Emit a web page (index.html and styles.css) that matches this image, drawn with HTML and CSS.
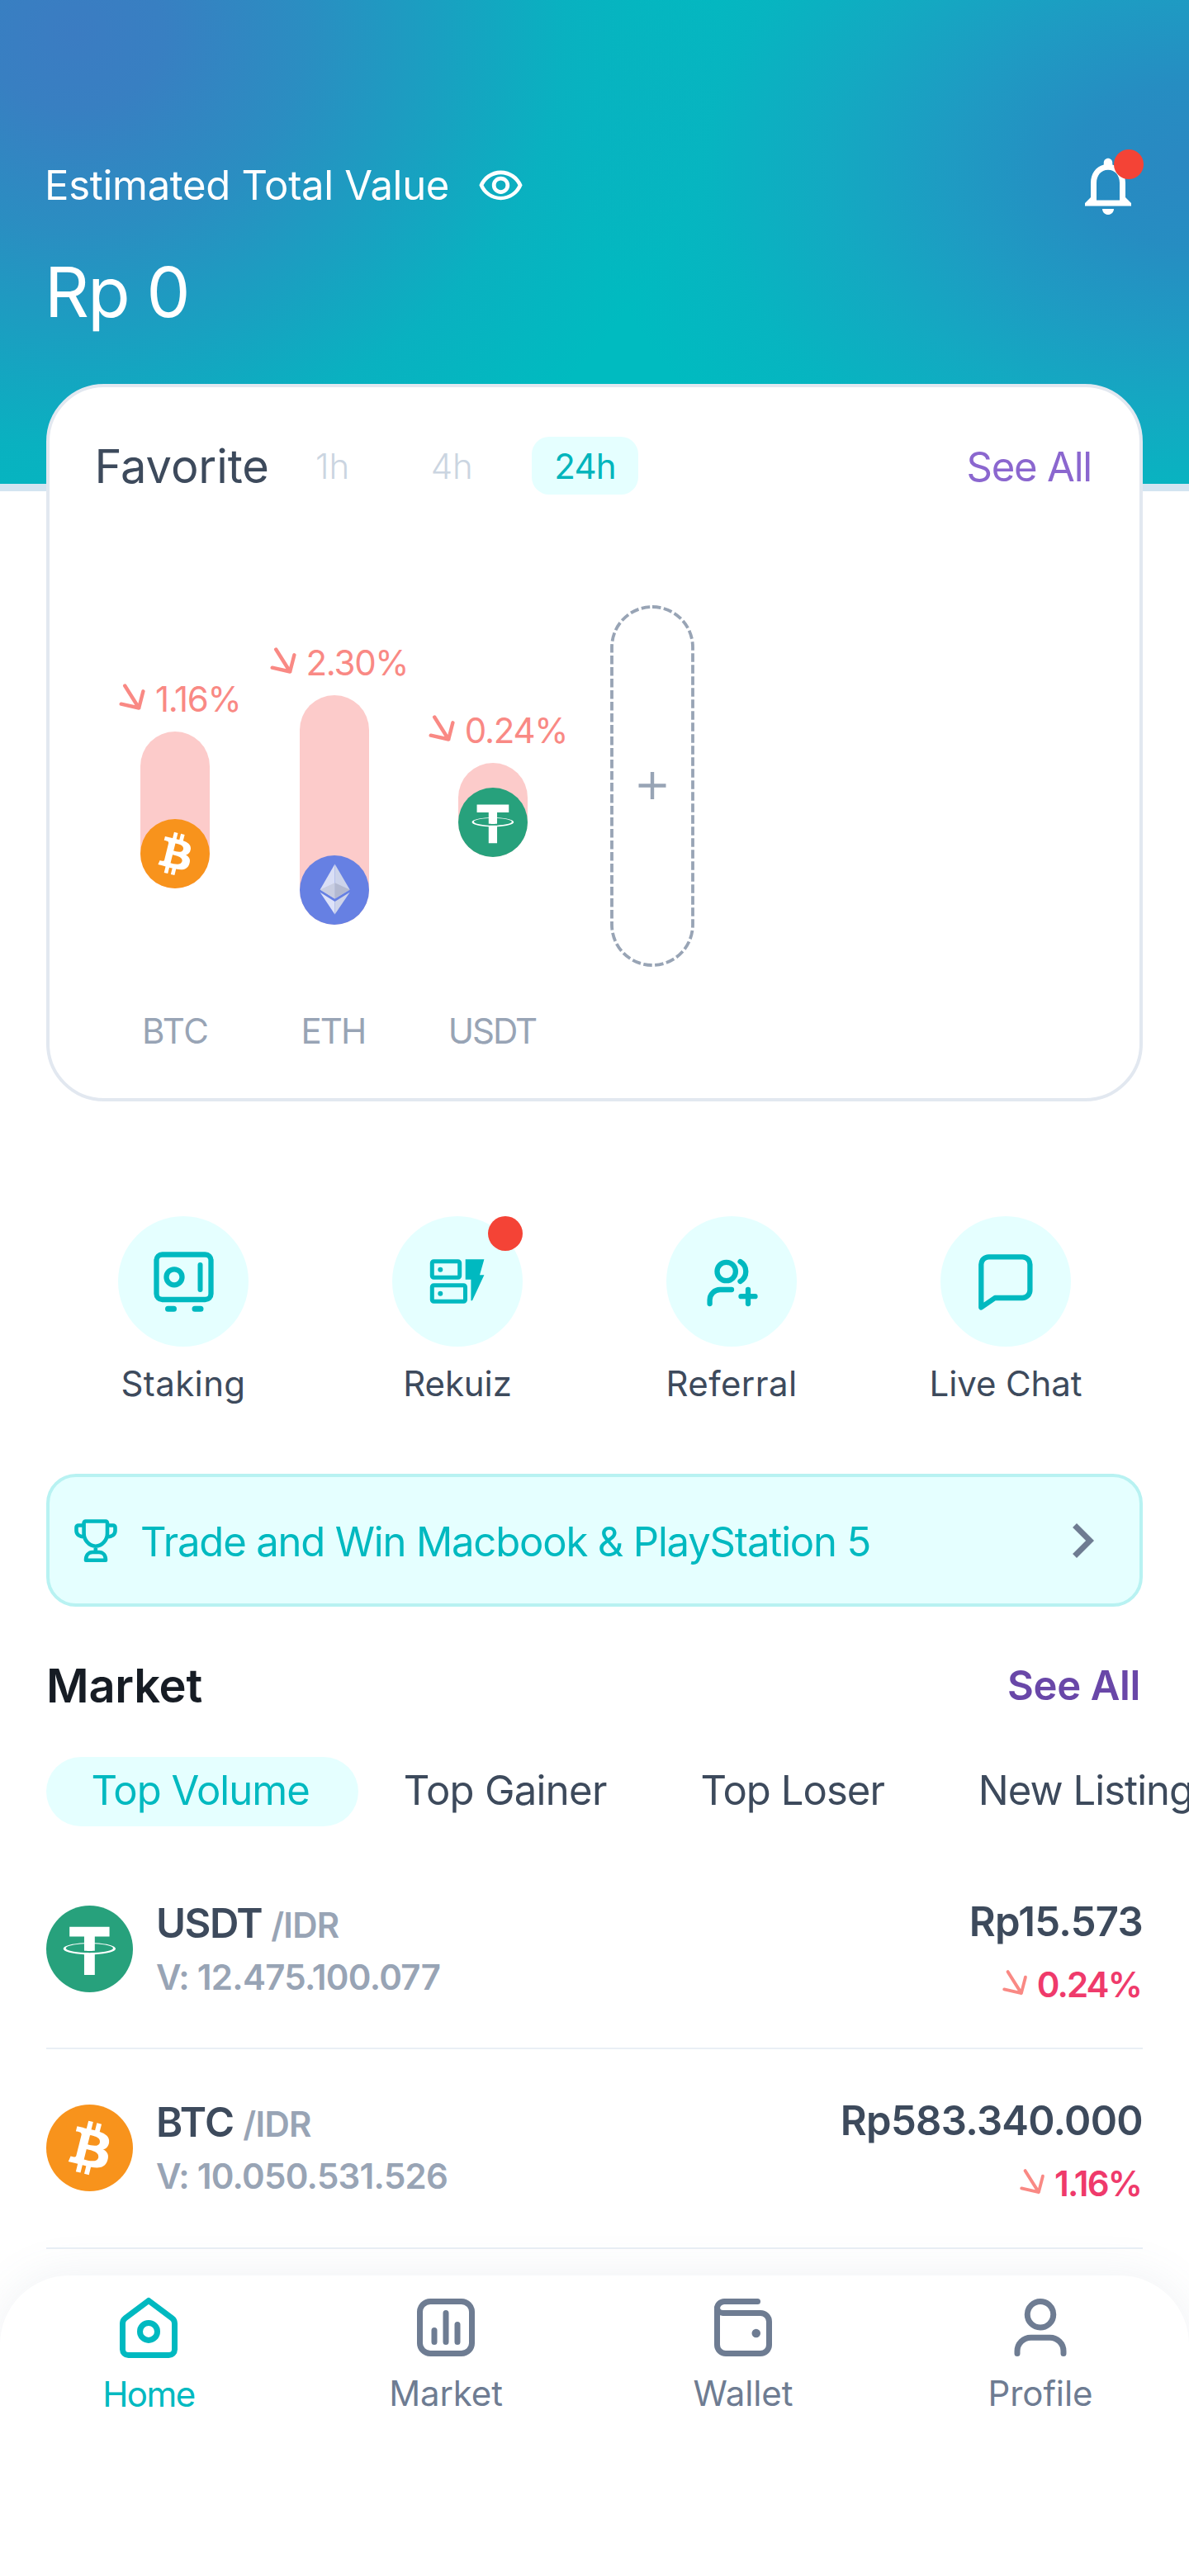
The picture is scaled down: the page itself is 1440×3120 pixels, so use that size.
FILE: index.html
```html
<!DOCTYPE html>
<html lang="en">
<head>
<meta charset="utf-8">
<title>Home</title>
<link rel="stylesheet" href="styles.css">
</head>
<body>
<svg class="defs" aria-hidden="true">
  <symbol id="down" viewBox="0 0 55 38"><path d="M18.2 2.5 35.2 29.5M13.7 24.7 35.2 29.5 40.4 9.3"/></symbol>
  <symbol id="btc" viewBox="0 0 32 32"><circle cx="16" cy="16" r="16" fill="#f8931c"/><path fill="#fff" d="M23.189 14.02c.314-2.096-1.283-3.223-3.465-3.975l.708-2.84-1.728-.43-.69 2.765c-.454-.114-.92-.22-1.385-.326l.695-2.783L15.596 6l-.708 2.839c-.376-.086-.746-.17-1.104-.26l.002-.009-2.384-.595-.46 1.846s1.283.294 1.256.312c.7.175.826.638.805 1.006l-.806 3.235c.048.012.11.03.18.057l-.183-.045-1.13 4.532c-.086.212-.303.531-.793.41.018.025-1.256-.313-1.256-.313l-.858 1.978 2.25.561c.418.105.828.215 1.231.318l-.715 2.872 1.727.43.708-2.84c.472.127.93.245 1.378.357l-.706 2.828 1.728.43.715-2.866c2.948.558 5.164.333 6.097-2.333.752-2.146-.037-3.385-1.588-4.192 1.13-.26 1.98-1.003 2.207-2.538zm-3.95 5.538c-.533 2.147-4.148.986-5.32.695l.95-3.805c1.172.293 4.929.872 4.37 3.11zm.535-5.569c-.487 1.953-3.495.96-4.47.717l.86-3.45c.975.243 4.118.696 3.61 2.733z"/></symbol>
  <symbol id="usdt" viewBox="0 0 32 32"><circle cx="16" cy="16" r="16" fill="#27a17c"/><path fill="#fff" d="M17.922 17.383v-.002c-.11.008-.677.042-1.942.042-1.01 0-1.721-.03-1.971-.042v.003c-3.888-.171-6.79-.848-6.79-1.658 0-.809 2.902-1.486 6.79-1.66v2.644c.254.018.982.061 1.988.061 1.207 0 1.812-.05 1.925-.06v-2.643c3.88.173 6.775.85 6.775 1.658 0 .81-2.895 1.485-6.775 1.657m0-3.59v-2.366h5.414V7.819H8.595v3.608h5.414v2.365c-4.4.202-7.709 1.074-7.709 2.118 0 1.044 3.309 1.915 7.709 2.118v7.582h3.913v-7.584c4.393-.202 7.694-1.073 7.694-2.116 0-1.043-3.301-1.914-7.694-2.117"/></symbol>
  <symbol id="eth" viewBox="0 0 32 32"><circle cx="16" cy="16" r="16" fill="#6680e3"/><path fill="#d9def5" d="M16.2 4 9.4 15.8 16.2 20z"/><path fill="#ccd3ea" d="M16.2 4v16l6.9-4.2z"/><path fill="#c8cde1" d="M9.4 15.8 16.2 12.7V20z"/><path fill="#b3b9d0" d="m23.1 15.8-6.9-3.1V20z"/><path fill="#dde2f9" d="m9.4 17 6.8 10.2v-5.9z"/><path fill="#ced4ea" d="m23.1 17-6.9 10.2v-5.9z"/></symbol>
</svg>

<header class="hero">
  <div class="hero-top">
    <span class="hero-label">Estimated Total Value</span>
    <svg class="eye" viewBox="0 0 24 24"><path fill="#fff" d="M12 6a9.77 9.77 0 0 1 8.82 5.5 9.647 9.647 0 0 1-17.64 0A9.77 9.77 0 0 1 12 6m0-2C7 4 2.73 7.11 1 11.5 2.73 15.89 7 19 12 19s9.27-3.11 11-7.5C21.27 7.11 17 4 12 4m0 5a2.5 2.5 0 0 1 0 5 2.5 2.5 0 0 1 0-5m0-2c-2.48 0-4.5 2.02-4.5 4.5S9.52 16 12 16s4.5-2.02 4.5-4.5S14.48 7 12 7"/></svg>
    <div class="bell">
      <svg viewBox="0 0 24 24"><path fill="#fff" d="M12 22c1.1 0 2-.9 2-2h-4c0 1.1.9 2 2 2zm6-6v-5c0-3.07-1.63-5.64-4.5-6.32V4c0-.83-.67-1.5-1.5-1.5s-1.5.67-1.5 1.5v.68C7.64 5.36 6 7.92 6 11v5l-2 2v1h16v-1l-2-2zm-2 1H8v-6c0-2.48 1.51-4.5 4-4.5s4 2.02 4 4.5v6z"/></svg>
      <i class="dot"></i>
    </div>
  </div>
  <div class="balance">Rp 0</div>
</header>

<main>
  <section class="card">
    <div class="card-head">
      <h2 class="card-title">Favorite</h2>
      <span class="range">1h</span>
      <span class="range">4h</span>
      <span class="range active">24h</span>
      <a class="see">See All</a>
    </div>
    <div class="chart">
      <div class="col">
        <div class="plot">
          <div class="pct"><svg class="arrow"><use href="#down"/></svg>1.16%</div>
          <div class="bar" style="height:189.5px"><svg class="coin"><use href="#btc"/></svg></div>
        </div>
        <div class="sym">BTC</div>
      </div>
      <div class="col">
        <div class="plot">
          <div class="pct"><svg class="arrow"><use href="#down"/></svg>2.30%</div>
          <div class="bar" style="height:277.5px"><svg class="coin"><use href="#eth"/></svg></div>
        </div>
        <div class="sym sym-tight">ETH</div>
      </div>
      <div class="col">
        <div class="plot">
          <div class="pct"><svg class="arrow"><use href="#down"/></svg>0.24%</div>
          <div class="bar" style="height:113.5px"><svg class="coin"><use href="#usdt"/></svg></div>
        </div>
        <div class="sym sym-tight">USDT</div>
      </div>
      <div class="col">
        <div class="plot">
          <svg class="add" viewBox="0 0 102 438" fill="none" stroke="#98a4b5"><rect x="2" y="2" width="98" height="434" rx="49" stroke-width="3.8" stroke-dasharray="10.5 3.5"/><path stroke-width="4.4" d="M34.5 218.5h33M51 202v33"/></svg>
        </div>
      </div>
    </div>
  </section>

  <section class="actions">
    <div class="action">
      <div class="bubble"><svg viewBox="0 0 158 158"><rect x="46.5" y="46.5" width="66" height="54.5" rx="7"/><path stroke-width="7" d="M60.5 112.2h7M93 112.2h7"/><circle cx="68" cy="73.8" r="9.5"/><path stroke-width="6" d="M99.5 59v30"/></svg></div>
      <div class="action-name spaced">Staking</div>
    </div>
    <div class="action">
      <div class="bubble"><svg viewBox="0 0 158 158"><g stroke-width="5"><rect x="48.3" y="54.8" width="33.4" height="19.4" rx="2"/><rect x="48.3" y="83.8" width="40.2" height="19.4" rx="2"/></g><g class="solid"><circle cx="58.3" cy="64.7" r="3"/><circle cx="58.3" cy="93.7" r="3"/><path d="M88.7 52.3h22.7l-5.4 19h5.4l-14.4 31h-1.6V76.7h-6.7z"/></g></svg><i class="dot"></i></div>
      <div class="action-name">Rekuiz</div>
    </div>
    <div class="action">
      <div class="bubble"><svg viewBox="0 0 158 158"><circle cx="72.7" cy="67" r="11.2"/><path d="M89.5 55a14 14 0 0 1 0 24M52.6 106v-4.5A12.5 12.5 0 0 1 65.1 89H79M90.5 97.2h17M99 89v17"/></svg></div>
      <div class="action-name spaced">Referral</div>
    </div>
    <div class="action">
      <div class="bubble"><svg viewBox="0 0 158 158"><path d="M49.3 110.5v-52a9.2 9.2 0 0 1 9.2-9.2h40.7a9.2 9.2 0 0 1 9.2 9.2v31.3a9.2 9.2 0 0 1-9.2 9.2H66z"/></svg></div>
      <div class="action-name">Live Chat</div>
    </div>
  </section>

  <a class="banner">
    <svg class="trophy" viewBox="0 0 52 52"><path d="M13.8 2.5h24a2 2 0 0 1 2.2 2.2V17c0 8-6 15.7-14.2 15.7S11.6 25 11.6 17V4.7a2 2 0 0 1 2.2-2.2zM11.6 7.5H5A2.5 2.5 0 0 0 2.5 10v4c0 4.5 4 7.2 9.5 7.4M40 7.5h7a2.5 2.5 0 0 1 2.5 2.5v4c0 4.5-4 7.2-9.5 7.4M25.8 33v7M14 49.7h24c0-6-3.5-9.7-8-9.7h-8c-4.5 0-8 3.7-8 9.7z"/></svg>
    <span class="banner-text">Trade and Win Macbook &amp; PlayStation 5</span>
    <svg class="chevron" viewBox="0 0 24 24"><path fill="#6e7c92" d="M10 6 8.59 7.41 13.17 12l-4.58 4.59L10 18l6-6z"/></svg>
  </a>

  <section class="market">
    <div class="market-head">
      <h2 class="market-title">Market</h2>
      <a class="see see-strong">See All</a>
    </div>
    <div class="tabs">
      <span class="tab active">Top Volume</span>
      <span class="tab">Top Gainer</span>
      <span class="tab">Top Loser</span>
      <span class="tab">New Listing</span>
    </div>
    <div class="rows">
      <div class="row">
        <svg class="logo"><use href="#usdt"/></svg>
        <div class="pair">
          <div class="pair-name"><b class="tight">USDT</b><span>/IDR</span></div>
          <div class="volume">V: 12.475.100.077</div>
        </div>
        <div class="quote">
          <div class="price">Rp15.573</div>
          <div class="change"><svg class="arrow"><use href="#down"/></svg>0.24%</div>
        </div>
      </div>
      <div class="row">
        <svg class="logo"><use href="#btc"/></svg>
        <div class="pair">
          <div class="pair-name"><b>BTC</b><span>/IDR</span></div>
          <div class="volume">V: 10.050.531.526</div>
        </div>
        <div class="quote">
          <div class="price">Rp583.340.000</div>
          <div class="change"><svg class="arrow"><use href="#down"/></svg>1.16%</div>
        </div>
      </div>
    </div>
  </section>
</main>

<nav class="nav">
  <a class="nav-item active">
    <svg viewBox="0 0 24 24"><path d="M12 2.7 3.9 8.8A2.3 2.3 0 0 0 3 10.7v8.9a2 2 0 0 0 2 2h14a2 2 0 0 0 2-2v-8.9a2.3 2.3 0 0 0-.9-1.9z"/><circle cx="12" cy="13.4" r="3"/></svg>
    <span>Home</span>
  </a>
  <a class="nav-item">
    <svg viewBox="0 0 24 24"><rect x="3" y="3" width="18" height="18" rx="3.6"/><path d="M8 13v4M12 7v10M16 11v6"/></svg>
    <span>Market</span>
  </a>
  <a class="nav-item">
    <svg viewBox="0 0 24 24"><path d="M17 3H5.5A2.5 2.5 0 0 0 3 5.5V18a3 3 0 0 0 3 3h12a3 3 0 0 0 3-3v-8a3 3 0 0 0-3-3H5a2 2 0 0 1-2-2"/><circle class="solid" cx="16.5" cy="14" r="1.5"/></svg>
    <span>Wallet</span>
  </a>
  <a class="nav-item">
    <svg viewBox="0 0 24 24"><circle cx="12" cy="7.5" r="4.5"/><path d="M4 21v-.8a4.7 4.7 0 0 1 4.7-4.7h6.6a4.7 4.7 0 0 1 4.7 4.7v.8"/></svg>
    <span>Profile</span>
  </a>
</nav>
</body>
</html>
```
FILE: styles.css
```css
* { box-sizing: border-box; }

body {
  margin: 0;
  width: 1440px;
  overflow-x: hidden;
  background: #fff;
  color: #3d4a5c;
  font-family: Inter, "Liberation Sans", sans-serif;
  font-weight: 400;
  font-size: 42px;
  line-height: 50px;
  font-kerning: normal;
}

h2 { margin: 0; }
svg { display: block; flex: none; }
.defs { position: absolute; width: 0; height: 0; }

.hero {
  height: 595px;
  padding: 176px 56px 0 54px;
  border-bottom: 9px solid #d3e4f1;
  color: #fff;
  background:
    radial-gradient(ellipse 780px 660px at 90px 40px,
      #3b7cc2 0%, #3b7cc2f2 14%, #3b7cc2b8 36%, #3b7cc270 56%, #3b7cc228 76%, #3b7cc200 100%),
    radial-gradient(ellipse 740px 500px at 1450px 200px,
      #2a88c2 0%, #2a88c2e6 20%, #2c8cc4b0 40%, #2c92c470 60%, #2c92c428 80%, #2c92c400 100%),
    #00bbc0;
}
.hero-top { display: flex; align-items: center; height: 98px; }
.hero-label { width: 487px; font-size: 49px; letter-spacing: -.3px; white-space: nowrap; }
.eye { width: 57px; height: 57px; margin-left: 37px; }
.bell { position: relative; width: 84px; height: 84px; margin-left: auto; }
.bell svg { width: 84px; height: 84px; }
.dot { position: absolute; border-radius: 50%; background: #f44336; }
.bell .dot { top: -2px; right: -1px; width: 36px; height: 36px; }
.balance {
  margin-top: 30px;
  font-size: 84px;
  font-weight: 400;
  line-height: 100px;
  letter-spacing: -1.9px;
}

main { padding: 0 56px; }

.card {
  position: relative;
  height: 869px;
  margin-top: -130px;
  border: 4px solid #e2e8f0;
  border-radius: 70px;
  background: #fff;
}
.card-head {
  display: flex;
  align-items: center;
  padding: 60px 58px 0 54.5px;
}
.card-title { margin-right: 29px; padding-top: 2px; font-size: 56px; font-weight: 400; letter-spacing: -.1px; }
.range {
  height: 70px;
  margin-right: 44.5px;
  padding: 1px 27px 0;
  border-radius: 21px;
  color: #cbd5e1;
  font-weight: 300;
  line-height: 70px;
}
.range.active { background: #e5ffff; color: #00b5bc; font-weight: 400; letter-spacing: -.8px; }
.see { margin-left: auto; padding-top: 4px; color: #8b67cf; font-size: 49px; letter-spacing: -1.2px; }

.chart { display: flex; padding: 134px 0 0 56px; }
.col { width: 192.6px; }
.plot {
  display: flex;
  flex-direction: column;
  align-items: center;
  justify-content: center;
  height: 438px;
}
.pct {
  display: flex;
  margin-bottom: 20px;
  color: #f98984;
  line-height: 38px;
  letter-spacing: -1.3px;
  white-space: nowrap;
}
.arrow { width: 55px; height: 38px; fill: none; stroke: #f98984; stroke-width: 4.4; stroke-linecap: round; stroke-linejoin: round; }
.bar { display: flex; align-items: flex-end; width: 84px; border-radius: 42px; background: #fccbca; }
.coin { width: 84px; height: 84px; }
.sym { margin-top: 53px; color: #98a4b5; letter-spacing: -.4px; text-align: center; }
.sym-tight { padding-right: 3px; letter-spacing: -2px; }
.add { width: 102px; height: 438px; }

.actions { display: grid; grid-template-columns: repeat(4, 1fr); margin-top: 139px; justify-items: center; }
.action { display: flex; flex-direction: column; align-items: center; gap: 20px; }
.bubble { position: relative; width: 158px; height: 158px; border-radius: 50%; background: #e5ffff; }
.bubble svg { width: 158px; height: 158px; fill: none; stroke: #00b9c0; stroke-width: 6.3; stroke-linecap: round; stroke-linejoin: round; }
.bubble .solid { fill: #00b9c0; stroke: none; }
.bubble .dot { top: 0; right: 0; width: 42px; height: 42px; }
.action-name { letter-spacing: -.1px; }
.action-name.spaced { letter-spacing: .4px; }

.banner {
  display: flex;
  align-items: center;
  height: 161px;
  margin-top: 84px;
  padding: 0 27px 0 29.5px;
  border: 4px solid #b8f2f2;
  border-radius: 36px;
  background: #e5ffff;
}
.trophy { width: 52px; height: 52px; fill: none; stroke: #00b9c0; stroke-width: 4.6; stroke-linejoin: round; }
.banner-text { margin-left: 28.5px; padding-top: 4px; color: #00b9c0; font-size: 49px; letter-spacing: -1.17px; }
.chevron { width: 84px; height: 84px; margin-left: auto; }

.market-head { display: flex; align-items: center; height: 60px; margin-top: 66px; padding-right: 3px; }
.market-title { color: #161c24; font-size: 56px; font-weight: 600; letter-spacing: -.25px; }
.see-strong { padding-top: 0; color: #6947a8; font-weight: 600; letter-spacing: -.36px; }

.tabs { display: flex; width: 1384px; margin-top: 56px; overflow: hidden; }
.tab {
  flex: none;
  height: 84px;
  padding: 0 59.5px 0 54.4px;
  border-radius: 42px;
  font-size: 49px;
  line-height: 82px;
  letter-spacing: -.95px;
}
.tab:nth-child(2) { letter-spacing: -.7px; }
.tab.active { background: #e5ffff; color: #00b9c0; }

.rows { margin-top: 28.5px; }
.row { display: flex; align-items: center; height: 241.5px; border-bottom: 2px solid #e9eff5; }
.logo { width: 105px; height: 105px; }
.pair { margin-left: 28px; padding-top: 3px; color: #98a4b5; font-weight: 600; letter-spacing: -.72px; }
.pair-name { display: flex; align-items: baseline; gap: 11px; height: 65px; line-height: 65px; }
.pair-name b { color: #3d4a5c; font-size: 49px; font-weight: 600; letter-spacing: -.7px; }
.pair-name .tight { letter-spacing: -1.5px; }
.volume { height: 65px; line-height: 65px; }
.quote { margin-left: auto; padding: 11px 0 0; font-weight: 600; }
.price { height: 76px; font-size: 49px; line-height: 76px; letter-spacing: -.7px; text-align: right; }
.change {
  display: flex;
  align-items: center;
  justify-content: flex-end;
  height: 76px;
  padding-right: 2px;
  color: #ef3a6b;
  letter-spacing: -1.87px;
}
.change .arrow { width: 53px; stroke-width: 4; }

.nav {
  position: relative;
  display: flex;
  height: 364px;
  margin-top: 32.5px;
  padding-top: 21px;
  border-radius: 84px 84px 0 0;
  background: #fff;
  box-shadow: 0 0 56px rgba(100, 116, 150, .1);
}
.nav-item { display: flex; flex: 1; flex-direction: column; align-items: center; gap: 13px; color: #6e7c92; letter-spacing: -.1px; }
.nav-item.active { gap: 14px; color: #00b9c0; letter-spacing: -1.5px; }
.nav-item svg { width: 84px; height: 84px; fill: none; stroke: currentColor; stroke-width: 2; stroke-linecap: round; stroke-linejoin: round; }
.nav-item .solid { fill: currentColor; stroke: none; }
```
